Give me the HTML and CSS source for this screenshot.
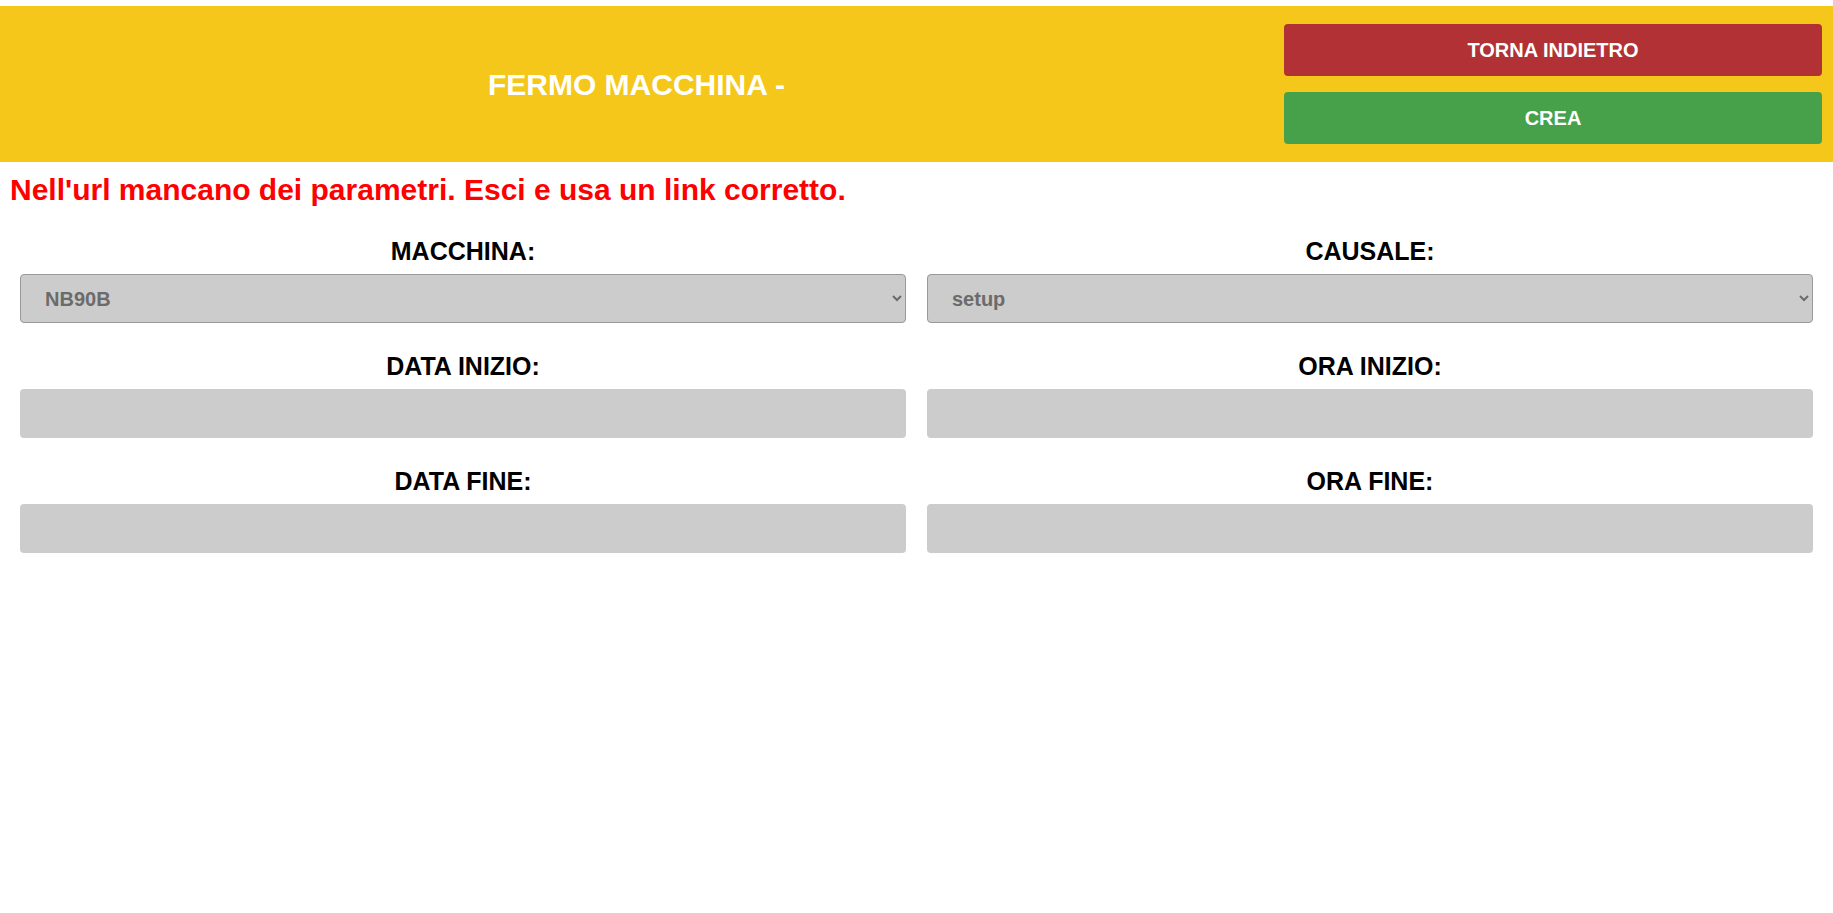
FILE: index.html
```html
<!DOCTYPE html>
<html lang="it">
<head>
<meta charset="utf-8">
<title>Fermo macchina</title>
<link rel="stylesheet" href="styles.css">
</head>
<body>
<header class="topbar">
  <div class="topbar-title">
    <h1 class="title">FERMO MACCHINA -</h1>
  </div>
  <div class="topbar-actions">
    <button class="btn btn-back" type="button">TORNA INDIETRO</button>
    <button class="btn btn-create" type="button">CREA</button>
  </div>
</header>
<p class="error">Nell'url mancano dei parametri. Esci e usa un link corretto.</p>
<main class="form">
  <div class="field">
    <label class="field-label">MACCHINA:</label>
    <select class="control select" disabled>
      <option>NB90B</option>
    </select>
  </div>
  <div class="field">
    <label class="field-label">CAUSALE:</label>
    <select class="control select" disabled>
      <option>setup</option>
    </select>
  </div>
  <div class="field">
    <label class="field-label">DATA INIZIO:</label>
    <input class="control input" type="text" disabled>
  </div>
  <div class="field">
    <label class="field-label">ORA INIZIO:</label>
    <input class="control input" type="text" disabled>
  </div>
  <div class="field">
    <label class="field-label">DATA FINE:</label>
    <input class="control input" type="text" disabled>
  </div>
  <div class="field">
    <label class="field-label">ORA FINE:</label>
    <input class="control input" type="text" disabled>
  </div>
</main>
</body>
</html>
```

FILE: styles.css
```css
* {
  box-sizing: border-box;
}

html, body {
  margin: 0;
  padding: 0;
  background: #ffffff;
  font-family: "Liberation Sans", Arial, sans-serif;
}

.topbar {
  margin-top: 6px;
  height: 156px;
  background: #f5c71a;
  display: grid;
  grid-template-columns: 1fr 560px;
}

.topbar-title {
  display: flex;
  align-items: center;
  justify-content: center;
}

.title {
  margin: 0;
  color: #ffffff;
  font-size: 30px;
  font-weight: bold;
  padding-top: 2px;
}

.topbar-actions {
  display: flex;
  flex-direction: column;
  gap: 16px;
  padding: 18px 11px;
}

.btn {
  height: 52px;
  border: none;
  border-radius: 4px;
  color: #ffffff;
  font-family: "Liberation Sans", Arial, sans-serif;
  font-size: 20px;
  font-weight: bold;
  cursor: pointer;
}

.btn-back {
  background: #b23134;
}

.btn-create {
  background: #46a14a;
}

.error {
  margin: 11px 0 0 10px;
  color: #ff0000;
  font-size: 30px;
  font-weight: bold;
}

.form {
  display: grid;
  grid-template-columns: 1fr 1fr;
  column-gap: 21px;
  row-gap: 29px;
  padding: 30px 20px 0 20px;
}

.field {
  display: flex;
  flex-direction: column;
}

.field-label {
  display: block;
  text-align: center;
  font-size: 25px;
  font-weight: bold;
  color: #000000;
  margin-bottom: 8px;
}

.control {
  width: 100%;
  height: 49px;
  background: #cccccc;
  border-radius: 4px;
  font-family: "Liberation Sans", Arial, sans-serif;
  font-size: 20px;
  font-weight: bold;
  color: #6b6b6b;
}

.select {
  border: 1px solid #999999;
  padding-left: 20px;
  opacity: 1;
}

.input {
  border: none;
  padding: 0 20px;
}
```
